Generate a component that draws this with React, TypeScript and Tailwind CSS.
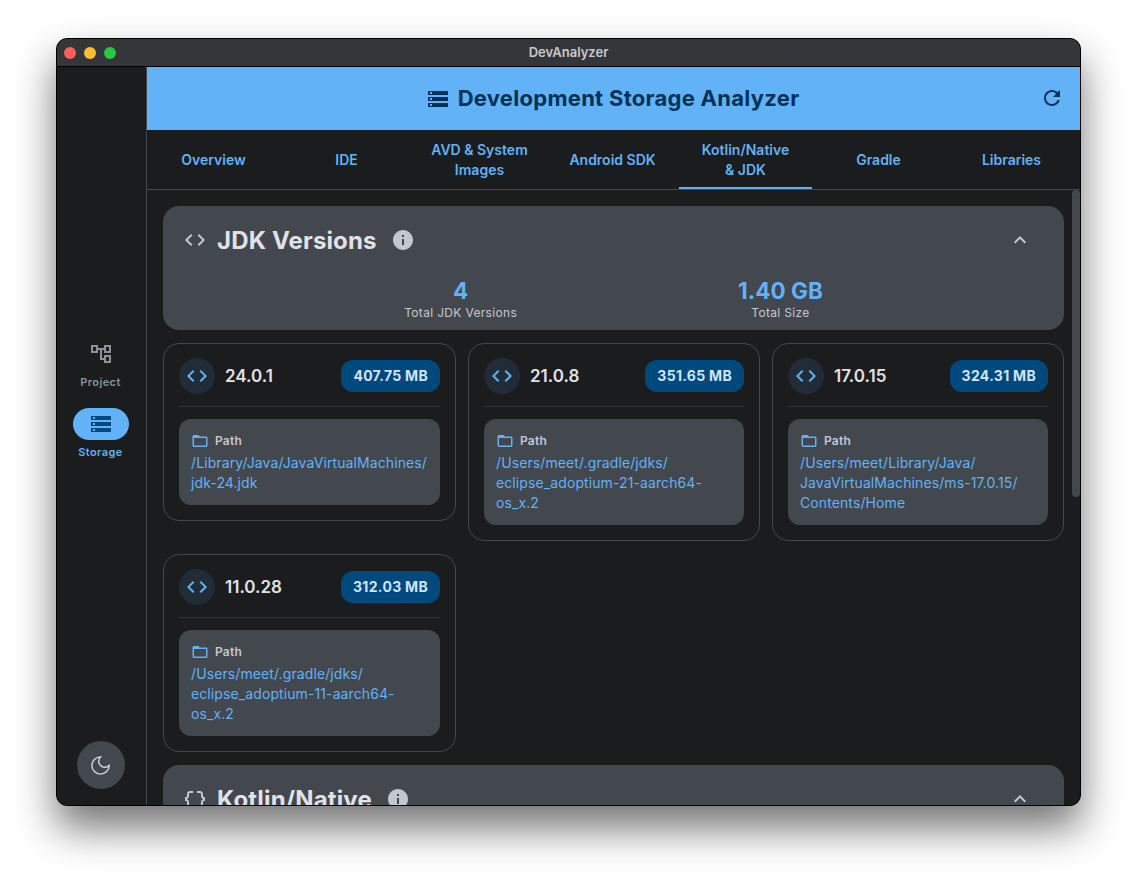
const paths = {
  storage: 'M2 20h20v-4H2v4zm2-3h2v2H4v-2zM2 4v4h20V4H2zm4 3H4V5h2v2zm-4 7h20v-4H2v4zm2-3h2v2H4v-2z',
  tree: 'M22 11V3h-7v3H9V3H2v8h7V8h2v10h4v3h7v-8h-7v3h-2V8h2v3h7zM7 9H4V5h3v4zm10 6h3v4h-3v-4zm0-10h3v4h-3V5z',
  code: 'M9.4 16.6L4.8 12l4.6-4.6L8 6l-6 6 6 6 1.4-1.4zm5.2 0l4.6-4.6-4.6-4.6L16 6l6 6-6 6-1.4-1.4z',
  refresh:
    'M17.65 6.35C16.2 4.9 14.21 4 12 4c-4.42 0-7.99 3.58-7.99 8s3.57 8 7.99 8c3.73 0 6.84-2.55 7.73-6h-2.08c-.82 2.33-3.04 4-5.65 4-3.31 0-6-2.69-6-6s2.69-6 6-6c1.66 0 3.14.69 4.22 1.78L13 11h7V4l-2.35 2.35z',
  info: 'M12 2C6.48 2 2 6.48 2 12s4.48 10 10 10 10-4.48 10-10S17.52 2 12 2zm1 15h-2v-6h2v6zm0-8h-2V7h2v2z',
  folder:
    'M20 6h-8l-2-2H4c-1.1 0-1.99.9-1.99 2L2 18c0 1.1.9 2 2 2h16c1.1 0 2-.9 2-2V8c0-1.1-.9-2-2-2zm0 12H4V8h16v10z',
  up: 'M12 8l-6 6 1.41 1.41L12 10.83l4.59 4.58L18 14z',
  braces:
    'M4 7v2c0 .55-.45 1-1 1H2v4h1c.55 0 1 .45 1 1v2c0 1.65 1.35 3 3 3h3v-2H7c-.55 0-1-.45-1-1v-2c0-1.3-.84-2.42-2-2.83v-.34C5.16 11.42 6 10.3 6 9V7c0-.55.45-1 1-1h3V4H7C5.35 4 4 5.35 4 7zm17 3c-.55 0-1-.45-1-1V7c0-1.65-1.35-3-3-3h-3v2h3c.55 0 1 .45 1 1v2c0 1.3.84 2.42 2 2.83v.34c-1.16.41-2 1.52-2 2.83v2c0 .55-.45 1-1 1h-3v2h3c1.65 0 3-1.35 3-3v-2c0-.55.45-1 1-1h1v-4h-1z',
};

function Icon({ d, className }: { d: string; className: string }) {
  return (
    <svg viewBox="0 0 24 24" fill="currentColor" className={className}>
      <path d={d} />
    </svg>
  );
}

const tabs = ['Overview', 'IDE', 'AVD & System\nImages', 'Android SDK', 'Kotlin/Native\n& JDK', 'Gradle', 'Libraries'];

const jdks = [
  { version: '24.0.1', size: '407.75 MB', path: '/Library/Java/JavaVirtualMachines/ jdk-24.jdk' },
  { version: '21.0.8', size: '351.65 MB', path: '/Users/meet/.gradle/jdks/ eclipse_adoptium-21-aarch64-os_x.2' },
  { version: '17.0.15', size: '324.31 MB', path: '/Users/meet/Library/Java/ JavaVirtualMachines/ms-17.0.15/ Contents/Home' },
  { version: '11.0.28', size: '312.03 MB', path: '/Users/meet/.gradle/jdks/ eclipse_adoptium-11-aarch64-os_x.2' },
];

function JdkCard({ version, size, path }: { version: string; size: string; path: string }) {
  return (
    <div className="rounded-2xl border border-[#43474e] px-[15px] pt-[14px] pb-[15px]">
      <div className="flex items-center justify-between border-b border-[#2e3136] pb-3">
        <div className="flex items-center gap-2.5">
          <div className="flex h-9 w-9 items-center justify-center rounded-full bg-[#212c37]">
            <Icon d={paths.code} className="h-6 w-6 text-[#61b2f6]" />
          </div>
          <span className="mt-[2px] text-[17px] font-semibold text-[#e2e2e6]">{version}</span>
        </div>
        <span className="rounded-xl bg-[#00497d] px-3 py-[7px] text-sm leading-[18px] font-bold tracking-[0.3px] text-[#d1e4ff]">
          {size}
        </span>
      </div>
      <div className="mt-3 rounded-xl bg-[#43474e] px-3 pt-[13px] pb-3">
        <div className="flex items-center gap-1.5">
          <Icon d={paths.folder} className="h-[18px] w-[18px] text-[#61b2f6]" />
          <span className="text-xs font-semibold tracking-[0.2px] text-[#c3c7cf]">Path</span>
        </div>
        <p className="mt-[3px] text-sm leading-5 tracking-[0.1px] text-[#61b2f6]">{path}</p>
      </div>
    </div>
  );
}

export default function App() {
  return (
    <div className="min-h-[880px] bg-white pt-[38px] pl-[56px] font-['Inter',sans-serif]">
      <div className="flex h-[768px] w-[1025px] flex-col overflow-hidden rounded-[11px] border border-black bg-[#1a1c1e] shadow-[0_22px_40px_rgba(0,0,0,0.55)]">
        <div className="relative flex h-7 shrink-0 items-center justify-center border-b border-black bg-[#35363a]">
          <div className="absolute left-[7px] flex gap-2">
            <span className="h-3 w-3 rounded-full bg-[#ff5f57]" />
            <span className="h-3 w-3 rounded-full bg-[#febc2e]" />
            <span className="h-3 w-3 rounded-full bg-[#28c840]" />
          </div>
          <span className="text-[13px] font-semibold text-[#c8c9cb]">DevAnalyzer</span>
        </div>

        <div className="flex min-h-0 flex-1">
          <aside className="flex w-[90px] shrink-0 flex-col items-center border-r border-[#43474e] bg-[#1a1c1e] pr-[2px]">
            <div className="mt-[271px] flex flex-col items-center">
              <div className="flex h-8 w-14 items-center justify-center">
                <Icon d={paths.tree} className="h-6 w-6 text-[#8e9197]" />
              </div>
              <span className="mt-1 text-[11px] leading-4 font-semibold tracking-[0.4px] text-[#8e9197]">Project</span>
            </div>
            <div className="mt-[18px] flex flex-col items-center">
              <div className="flex h-8 w-14 items-center justify-center rounded-full bg-[#61b2f6]">
                <Icon d={paths.storage} className="h-6 w-6 text-[#00497d]" />
              </div>
              <span className="mt-1 text-[11px] leading-4 font-semibold tracking-[0.4px] text-[#61b2f6]">Storage</span>
            </div>
            <button className="mt-auto mb-4 flex h-12 w-12 items-center justify-center rounded-full bg-[#43474e]">
              <svg
                viewBox="0 0 24 24"
                fill="none"
                stroke="currentColor"
                strokeWidth="1.5"
                className="h-[23px] w-[23px] text-[#d5d7dc]"
              >
                <path d="M12 3a6 6 0 0 0 9 9 9 9 0 1 1-9-9Z" />
              </svg>
            </button>
          </aside>

          <main className="relative flex min-w-0 flex-1 flex-col">
            <header className="flex h-[63px] shrink-0 items-center justify-between bg-[#61b2f6] px-4">
              <div className="w-6" />
              <div className="mr-[2px] flex items-center gap-2">
                <Icon d={paths.storage} className="h-6 w-6 text-[#003258]" />
                <h1 className="text-[22px] font-bold tracking-[0.28px] text-[#003258]">Development Storage Analyzer</h1>
              </div>
              <Icon d={paths.refresh} className="-mt-px h-6 w-6 text-[#003258]" />
            </header>

            <nav className="h-[60px] shrink-0 border-b border-[#43474e] pr-[2px]">
              <div className="flex h-full">
                {tabs.map((t) => (
                  <div
                    key={t}
                    className={`flex flex-1 items-center justify-center border-b-2 pt-[2px] text-center text-sm leading-5 font-semibold whitespace-pre-line text-[#61b2f6] ${
                      t.startsWith('Kotlin') ? 'border-[#61b2f6]' : 'border-transparent'
                    }`}
                  >
                    {t}
                  </div>
                ))}
              </div>
            </nav>

            <div className="min-h-0 flex-1 space-y-[13px] overflow-hidden p-4">
              <section className="rounded-2xl bg-[#43474e] px-4 pt-4 pb-[9px]">
                <div className="flex h-9 items-center">
                  <Icon d={paths.code} className="ml-[4px] h-6 w-6 text-[#c3c7cf]" />
                  <h2 className="ml-[10px] pt-[2px] text-2xl font-bold tracking-[0.15px] text-[#e2e2e6]">JDK Versions</h2>
                  <Icon d={paths.info} className="ml-[14px] h-6 w-6 text-[#c3c7cf]" />
                  <Icon d={paths.up} className="mr-[16px] ml-auto h-6 w-6 text-[#c3c7cf]" />
                </div>
                <div className="mt-[19px] flex justify-center gap-[221px] text-center">
                  <div>
                    <div className="text-[22.5px] leading-7 font-bold text-[#61b2f6]">4</div>
                    <div className="text-xs leading-4 tracking-[0.33px] text-[#c3c7cf]">Total JDK Versions</div>
                  </div>
                  <div>
                    <div className="text-[22.5px] leading-7 font-bold text-[#61b2f6]">1.40 GB</div>
                    <div className="text-xs leading-4 tracking-[0.33px] text-[#c3c7cf]">Total Size</div>
                  </div>
                </div>
              </section>

              <div className="grid grid-cols-[293px_292px_292px] items-start gap-x-3 gap-y-[13px]">
                {jdks.map((j) => (
                  <JdkCard key={j.version} {...j} />
                ))}
              </div>

              <section className="rounded-2xl bg-[#43474e] px-4 pt-4 pb-2">
                <div className="flex h-9 items-center">
                  <Icon d={paths.braces} className="ml-[4px] h-6 w-6 text-[#c3c7cf]" />
                  <h2 className="ml-[10px] pt-[2px] text-2xl font-bold tracking-[0.15px] text-[#e2e2e6]">Kotlin/Native</h2>
                  <Icon d={paths.info} className="ml-[14px] h-6 w-6 text-[#c3c7cf]" />
                  <Icon d={paths.up} className="mr-[16px] ml-auto h-6 w-6 text-[#c3c7cf]" />
                </div>
              </section>
            </div>

            <div className="absolute top-[123px] right-0 h-[307px] w-2 rounded-full bg-[#43474e]" />
          </main>
        </div>
      </div>
    </div>
  );
}
